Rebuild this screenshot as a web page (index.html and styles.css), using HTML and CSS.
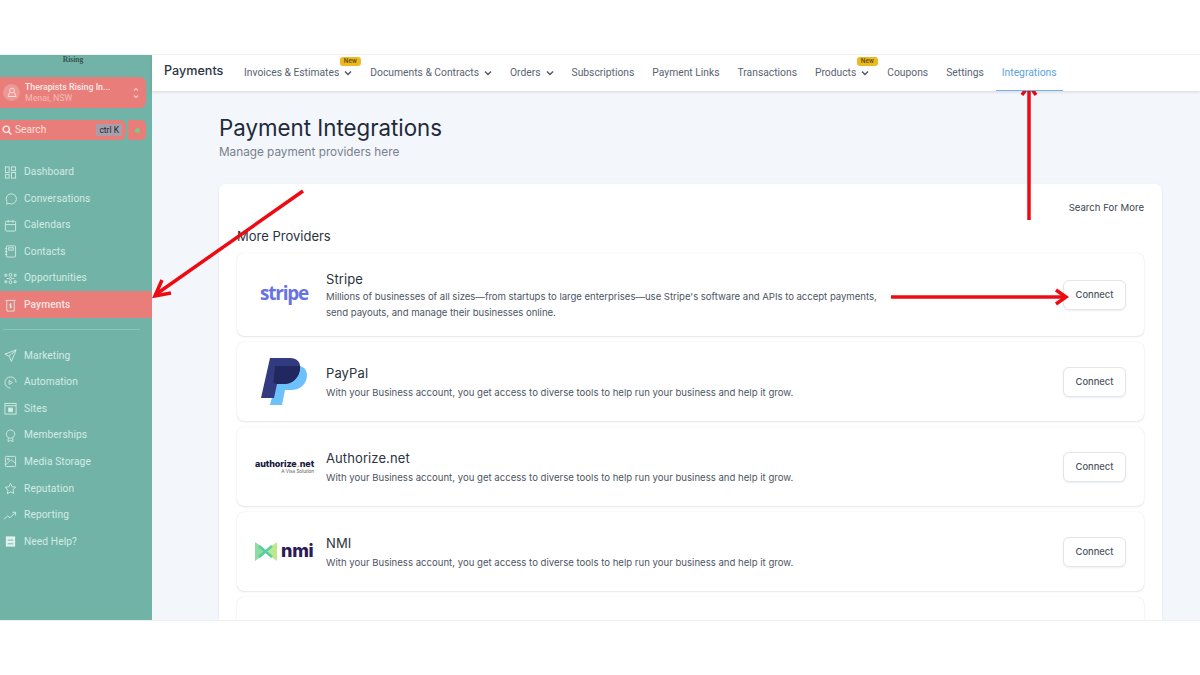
FILE: index.html
```html
<!DOCTYPE html>
<html lang="en">
<head>
<meta charset="utf-8">
<title>Payment Integrations</title>
<link rel="stylesheet" href="styles.css">
</head>
<body>
<div class="band-top"></div>
<div class="app">
  <aside class="sidebar">
    <div class="logo">Rising</div>
    <div class="location">
      <span class="loc-avatar"><svg width="10" height="11" viewBox="0 0 10 11" fill="none" stroke="#fbe0de" stroke-width="1"><circle cx="5" cy="3.500" r="2.400"/><path d="M2.500 5.500 1 9.500h8L7.500 5.500"/></svg></span>
      <span class="loc-text"><span class="loc-name">Therapists Rising In...</span><span class="loc-city">Menai, NSW</span></span>
      <svg class="loc-arrows" width="6" height="14" viewBox="0 0 6 14" fill="none" stroke="#f6c9c6" stroke-width="1.200"><path d="M1 4.500 3 2.500l2 2M1 9.500l2 2 2-2"/></svg>
    </div>
    <div class="search-row">
      <div class="search">
        <svg width="10" height="10" viewBox="0 0 9 9" fill="none" stroke="#fdeeee" stroke-width="1.200"><circle cx="3.800" cy="3.800" r="2.800"/><path d="m6 6 2.500 2.500"/></svg>
        <span class="search-label">Search</span>
        <span class="kbd">ctrl K</span>
      </div>
      <div class="dot-box"><span class="dot"></span></div>
    </div>
    <nav class="nav">
      <a class="nav-item"><svg class="ni" viewBox="0 0 14 14"><rect x="1.500" y="1" width="4" height="6"/><rect x="8" y="1" width="4.500" height="4"/><rect x="1.500" y="9" width="4" height="4"/><rect x="8" y="7" width="4.500" height="6"/></svg>Dashboard</a>
      <a class="nav-item"><svg class="ni" viewBox="0 0 14 14"><path d="M2.500 13c.8-1 .9-1.800.6-2.800A5.500 5.500 0 1 1 5.500 12.400C4.500 12.600 3.500 12.900 2.500 13Z"/></svg>Conversations</a>
      <a class="nav-item"><svg class="ni" viewBox="0 0 14 14"><rect x="1.500" y="2.500" width="11" height="10.500" rx="1"/><path d="M1.500 6h11M4.500 1v3M9.500 1v3"/></svg>Calendars</a>
      <a class="nav-item"><svg class="ni" viewBox="0 0 14 14"><rect x="2.500" y="1" width="10" height="12" rx="1"/><rect x="5" y="3" width="5" height="2.500"/><path d="M1 4h2.500M1 7h2.500M1 10h2.500"/></svg>Contacts</a>
      <a class="nav-item"><svg class="ni" viewBox="0 0 14 14"><circle cx="7" cy="3" r="1.500"/><circle cx="7" cy="11" r="1.500"/><circle cx="7" cy="7" r="1.200"/><path d="M1 2.500h2v2H1zM11 2.500h2v2h-2zM1 9.500h2v2H1zM11 9.500h2v2h-2zM3 7h2M9 7h2"/></svg>Opportunities</a>
      <a class="nav-item active"><svg class="ni" viewBox="0 0 14 14"><path d="M1.500 1.500h11M3 1.500V13h8V1.500"/><path d="M8.200 5.500H6.300v1.800h1.600v1.800H6M7 4.500v5.500"/></svg>Payments</a>
      <div class="nav-divider"></div>
      <a class="nav-item"><svg class="ni" viewBox="0 0 14 14"><path d="M13 1 1 5.500l4.500 2.200L8 13.500 13 1ZM5.500 7.700 13 1"/></svg>Marketing</a>
      <a class="nav-item"><svg class="ni" viewBox="0 0 14 14"><path d="M13 7A6 6 0 1 0 7 13"/><path d="M5.500 4.800 9 7 5.500 9.200Z"/></svg>Automation</a>
      <a class="nav-item"><svg class="ni" viewBox="0 0 14 14"><rect x="1" y="1.500" width="12" height="11.500"/><path d="M1 4h12"/><rect x="5" y="6.500" width="4" height="4" fill="#d8efe9"/></svg>Sites</a>
      <a class="nav-item"><svg class="ni" viewBox="0 0 14 14"><circle cx="7" cy="5.500" r="4.500"/><path d="M4.500 9.500V13.500L7 12.300l2.500 1.200V9.500"/></svg>Memberships</a>
      <a class="nav-item"><svg class="ni" viewBox="0 0 14 14"><rect x="1.500" y="1.500" width="11" height="11" rx="1"/><path d="m1.500 11 6-6 5 4"/><circle cx="4.500" cy="4.500" r="1"/></svg>Media Storage</a>
      <a class="nav-item"><svg class="ni" viewBox="0 0 14 14"><path d="m7 1.500 1.700 3.600 3.900.5-2.900 2.700.8 3.900L7 10.700 3.500 12.700l.8-3.900L1.400 5.600l3.900-.5Z"/></svg>Reputation</a>
      <a class="nav-item"><svg class="ni ni-wide" viewBox="0 0 14 14"><path d="m.5 11 4-3.500 2.500 2L13 3.500M9.500 3.500H13V7"/></svg>Reporting</a>
      <a class="nav-item"><svg class="ni ni-solid" viewBox="0 0 14 14"><path d="M2 1.500h10v11H2z"/><path class="cut" d="M4 5.500h6M4 9.500h6"/></svg>Need Help?</a>
    </nav>
  </aside>
  <main class="main">
    <header class="topbar">
      <span class="brand">Payments</span>
      <div class="tabs">
        <a class="tab has-new">Invoices &amp; Estimates<svg class="chev" viewBox="0 0 8 6"><path d="m1 1.500 3 3 3-3"/></svg><span class="new">New</span></a>
        <a class="tab">Documents &amp; Contracts<svg class="chev" viewBox="0 0 8 6"><path d="m1 1.500 3 3 3-3"/></svg></a>
        <a class="tab">Orders<svg class="chev" viewBox="0 0 8 6"><path d="m1 1.500 3 3 3-3"/></svg></a>
        <a class="tab">Subscriptions</a>
        <a class="tab">Payment Links</a>
        <a class="tab">Transactions</a>
        <a class="tab has-new">Products<svg class="chev" viewBox="0 0 8 6"><path d="m1 1.500 3 3 3-3"/></svg><span class="new">New</span></a>
        <a class="tab">Coupons</a>
        <a class="tab">Settings</a>
        <a class="tab current">Integrations</a>
      </div>
    </header>
    <div class="page">
      <h1 class="title">Payment Integrations</h1>
      <p class="subtitle">Manage payment providers here</p>
      <section class="card">
        <div class="search-more">Search For More</div>
        <h2 class="more">More Providers</h2>
        <div class="provider provider-stripe">
          <div class="plogo"><span class="stripe">stripe</span></div>
          <div class="pinfo">
            <div class="pname">Stripe</div>
            <p class="pdesc">Millions of businesses of all sizes—from startups to large enterprises—use Stripe's software and APIs to accept payments, send payouts, and manage their businesses online.</p>
          </div>
          <button class="connect">Connect</button>
        </div>
        <div class="provider">
          <div class="plogo">
            <svg width="48" height="48" viewBox="0 0 48 48"><path fill="#6cc0fb" d="M10 47h12l3-15h6c9 0 16-6 16-15 0-5-3-8-7-9H20Z"/><path fill="#323a80" d="M1 40 10 0h20c7 0 11 4 10 11-1 9-8 15-16 15h-7l-3 14Z"/><path fill="#20285f" d="M15 8h24.800c.1 1 .2 2 .2 3-1 9-8 15-16 15h-7l-3.500-1Z"/></svg>
          </div>
          <div class="pinfo">
            <div class="pname">PayPal</div>
            <p class="pdesc">With your Business account, you get access to diverse tools to help run your business and help it grow.</p>
          </div>
          <button class="connect">Connect</button>
        </div>
        <div class="provider">
          <div class="plogo plogo-auth"><span class="auth">authorize<span class="auth-dot">.</span>net</span><span class="visa">A Visa Solution</span></div>
          <div class="pinfo">
            <div class="pname">Authorize.net</div>
            <p class="pdesc">With your Business account, you get access to diverse tools to help run your business and help it grow.</p>
          </div>
          <button class="connect">Connect</button>
        </div>
        <div class="provider">
          <div class="plogo plogo-nmi">
            <svg width="22" height="19" viewBox="0 0 22 19"><path fill="#8fdca0" d="M0 0 9 6.500v6L0 19Z"/><path fill="#bfe88a" d="M22 0v19l-9-6.500v-6Z"/><path fill="none" stroke="#57cfa6" stroke-width="2.500" d="M4 4 17 15M4 15 17 4"/></svg>
            <span class="nmi">nmi</span>
          </div>
          <div class="pinfo">
            <div class="pname">NMI</div>
            <p class="pdesc">With your Business account, you get access to diverse tools to help run your business and help it grow.</p>
          </div>
          <button class="connect">Connect</button>
        </div>
        <div class="provider"></div>
      </section>
    </div>
  </main>
</div>
<div class="band-bottom"></div>
<svg class="arrows" width="1200" height="675" viewBox="0 0 1200 675" fill="none" stroke="#ee0a12" stroke-width="3.500">
  <path d="M303 191 155 295"/><path d="M171 293 155 296 162 280"/>
  <path d="M1029 220V87"/><path d="M1022 95 1029 85 1036 95"/>
  <path d="M891 297H1065"/><path d="M1056 290 1066 297 1056 304"/>
</svg>
</body>
</html>
```

FILE: styles.css
```css
* { box-sizing: border-box; }
html, body { margin: 0; padding: 0; }
body { width: 1200px; height: 675px; overflow: hidden; background: #fff; font-family: Inter, "Liberation Sans", sans-serif; position: relative; }
.band-top { height: 55px; background: #fff; border-bottom: 1px solid #f1f1f1; }
.band-bottom { height: 55px; background: #fff; border-top: 1px solid #eef0f2; }
.app { height: 565px; display: flex; overflow: hidden; }

.sidebar { width: 152px; flex: none; background: #72b3a7; display: flex; flex-direction: column; overflow: hidden; }
.logo { height: 22px; width: 146px; text-align: center; font: 700 7.500px/9px "Liberation Serif", serif; color: #3a5550; }
.location { width: 146px; height: 31px; background: #e97d79; border-radius: 0 6px 6px 0; display: flex; align-items: center; padding: 0 7px 0 3px; }
.loc-avatar { width: 17px; height: 17px; border-radius: 50%; background: #ee9794; display: flex; align-items: center; justify-content: center; flex: none; margin-right: 5px; }
.loc-text { flex: 1; display: flex; flex-direction: column; }
.loc-name { font: 500 8.800px/11px Roboto, sans-serif; color: #fde9e7; }
.loc-city { font: 400 8.800px/11px Roboto, sans-serif; color: #f6bdb9; }
.search-row { display: flex; gap: 2px; margin-top: 12px; width: 146px; height: 20px; }
.search { width: 126px; background: #e97d79; border-radius: 0 6px 6px 0; display: flex; align-items: center; padding: 0 4px 0 2px; }
.search-label { flex: 1; font: 400 10.200px/20px Roboto, sans-serif; color: #fbe0de; margin-left: 3px; }
.kbd { background: #a4a1ad; color: #26262e; font: 400 8.500px/12px Roboto, sans-serif; padding: 0 3px; border-radius: 2px; }
.dot-box { flex: 1; background: #e97d79; border-radius: 0 5px 5px 0; display: flex; align-items: center; justify-content: center; }
.dot { width: 5px; height: 5px; border-radius: 50%; background: #7dc98a; }
.nav { display: flex; flex-direction: column; margin-top: 18px; }
.nav-item { height: 26.600px; display: flex; align-items: center; padding: 1.500px 0 0 4px; font: 400 10.200px/14px Roboto, sans-serif; letter-spacing: .1px; color: #d2ebe5; gap: 7px; }
.nav-item.active { background: #e97d79; color: #fde4e2; font-weight: 500; }
.ni { width: 13px; height: 13px; flex: none; fill: none; stroke: #cfe9e3; stroke-width: 1; }
.ni-wide { width: 14px; margin-left: -1px; }
.ni-solid { fill: #e1f1ed; stroke: none; }
.ni-solid .cut { stroke: #72b3a7; stroke-width: 1; fill: none; }
.nav-divider { height: 1px; background: #8cc3b8; margin: 11px 12px 12px 3px; }

.main { flex: 1; min-width: 0; background: #f3f6fa; display: flex; flex-direction: column; }
.topbar { height: 36px; flex: none; background: #fff; box-shadow: 0 1px 3px rgba(30,50,80,.14); display: flex; align-items: center; padding-left: 12px; position: relative; z-index: 1; }
.brand { font: 500 12.600px/16px Inter, sans-serif; color: #2c3543; width: 80px; flex: none; padding-bottom: 4px; height: 20px; }
.tabs { display: flex; height: 36px; gap: 18px; }
.tab { position: relative; display: flex; align-items: center; font: 400 10.300px/14px Roboto, sans-serif; color: #5a6371; white-space: nowrap; }
.tab.current { color: #5aa3de; padding: 0 6px; margin-left: -6px; margin-right: -6px; border-bottom: 1.500px solid #7ab4e4; }
.chev { width: 8px; height: 6px; margin-left: 5px; fill: none; stroke: #4d5665; stroke-width: 1.400; }
.new { position: absolute; top: 2px; right: -8.500px; width: 21px; height: 9px; background: #ecb920; border-radius: 3px; color: #5b4a10; font: 500 6.500px/9px Roboto, sans-serif; text-align: center; }

.page { flex: 1; min-height: 0; padding: 24px 38px 0 67px; overflow: hidden; }
.title { margin: 0; font: 400 22.300px/26px Inter, sans-serif; color: #1f2a3a; }
.subtitle { margin: 3px 0 0; font: 400 11.750px/16px Inter, sans-serif; color: #78818e; }
.card { margin-top: 24px; background: #fff; border-radius: 7px; box-shadow: 0 1px 3px rgba(30,50,80,.08); padding: 17px 18px 0; height: 500px; }
.search-more { font: 400 9.600px/13px Inter, sans-serif; color: #3d4552; text-align: right; }
.more { margin: 14px 0 9px; font: 400 13px/16px Inter, sans-serif; color: #2b3340; }
.provider { height: 79px; background: #fff; border-radius: 7px; margin-bottom: 6px; box-shadow: 0 0 1px rgba(30,50,80,.18), 0 1px 2px rgba(30,50,80,.1); display: flex; align-items: center; padding: 0 18px 0 17px; }
.provider-stripe { height: 83px; }
.provider-stripe .pinfo { padding-top: 3px; }
.provider-stripe .pdesc { margin-top: 1px; line-height: 16px; letter-spacing: -.04px; }
.provider-stripe .plogo { padding-bottom: 4px; }
.plogo { width: 60px; margin-right: 12px; flex: none; display: flex; justify-content: center; align-items: center; }
.plogo-auth { flex-direction: column; align-items: flex-end; }
.plogo-nmi { justify-content: flex-start; gap: 4px; padding: 0 0 1px 1px; }
.stripe { font: 700 19px/24px "Open Sans", sans-serif; color: #6772e5; letter-spacing: -1.200px; }
.auth { font: 800 9px/10px Inter, sans-serif; color: #17203f; white-space: nowrap; letter-spacing: -.1px; }
.auth-dot { color: #e0a526; }
.visa { font: 400 4.600px/5px Inter, sans-serif; color: #555; }
.nmi { font: 800 18px/20px Inter, sans-serif; color: #2a1c55; letter-spacing: -.3px; }
.pinfo { flex: 1; min-width: 0; padding-top: 2px; }
.pname { font: 400 13px/17px Inter, sans-serif; color: #2b3340; letter-spacing: .1px; }
.pdesc { margin: 3px 0 0; max-width: 560px; font: 400 9.600px/15px Inter, sans-serif; color: #4d5563; }
.connect { width: 63px; height: 30px; flex: none; background: #fff; border: 1px solid #e2e5ea; border-radius: 6px; font: 500 9.400px/14px Inter, sans-serif; color: #4d5563; box-shadow: 0 1px 2px rgba(30,50,80,.08); padding: 0; }

.arrows { position: absolute; left: 0; top: 0; pointer-events: none; }
```
